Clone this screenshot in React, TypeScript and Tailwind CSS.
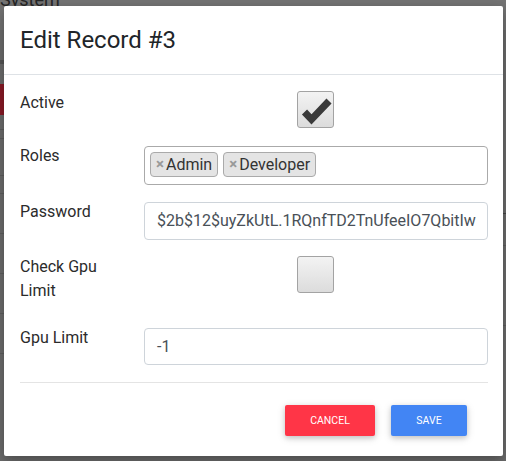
import React from "react";

function Check({ checked }: { checked: boolean }) {
  return (
    <div className="w-[37px] h-[37px] rounded-[3px] border border-[#a3a3a3] bg-gradient-to-b from-[#f3f3f3] to-[#dcdcdc] relative">
      {checked && (
        <svg className="absolute left-0 top-0" width="36" height="36" viewBox="0 0 36 36">
          <polyline
            points="6.5,20 13.5,27.5 31,9"
            fill="none"
            stroke="#3a3a3a"
            strokeWidth="7"
            strokeLinejoin="miter"
            strokeLinecap="butt"
          />
        </svg>
      )}
    </div>
  );
}

function Tag({ label }: { label: string }) {
  return (
    <div className="flex items-center h-[25px] mr-[5px] px-[5px] rounded-[4px] border border-[#aaaaaa] bg-[#e4e4e4] text-[16px] leading-[23px] text-[#333]">
      <span className="text-[#999] font-bold text-[15px] mr-[2px]">×</span>
      <span>{label}</span>
    </div>
  );
}

export default function App() {
  const font = { fontFamily: "Roboto, 'Liberation Sans', sans-serif" };
  return (
    <div className="relative w-[506px] h-[461px] overflow-hidden bg-[#6c6c6c]" style={font}>
      {/* background page (dimmed) */}
      <div className="absolute left-0 top-0 w-[506px] h-[30px] bg-[#747474]" />
      <div className="absolute left-0 top-[-10px] text-[18px] leading-[20px] text-[#262626]">System</div>
      <div className="absolute left-0 top-[60px] w-[4px] h-[4px] bg-[#555]" />
      <div className="absolute left-0 top-[84px] w-[4px] h-[31px] bg-[#8a1a26]" />
      <div className="absolute left-0 top-[129px] w-[4px] h-px bg-[#5e5e5e]" />
      <div className="absolute left-0 top-[138px] w-[4px] h-px bg-[#5e5e5e]" />
      <div className="absolute left-0 top-[175px] w-[4px] h-px bg-[#5e5e5e]" />
      <div className="absolute left-0 top-[193px] w-[4px] h-px bg-[#5e5e5e]" />
      <div className="absolute left-0 top-[233px] w-[4px] h-px bg-[#5e5e5e]" />
      <div className="absolute left-0 top-[273px] w-[4px] h-px bg-[#5e5e5e]" />
      <div className="absolute left-0 top-[313px] w-[4px] h-px bg-[#5e5e5e]" />
      <div className="absolute left-0 top-[353px] w-[4px] h-px bg-[#5e5e5e]" />
      <div className="absolute right-0 top-[213px] w-[3px] h-px bg-[#444]" />
      <div className="absolute right-0 top-[245px] w-[3px] h-px bg-[#5e5e5e]" />
      <div className="absolute right-0 top-[325px] w-[3px] h-px bg-[#5e5e5e]" />

      {/* modal */}
      <div className="absolute left-[4px] top-[6px] w-[499px] h-[450px] bg-white rounded-[2px] shadow-[0_5px_11px_0_rgba(0,0,0,0.18),0_4px_15px_0_rgba(0,0,0,0.15)] flex flex-col">
        <div className="h-[68px] px-[16px] flex items-center border-b border-[#dee2e6] box-content">
          <h4 className="text-[24px] leading-[36px] font-normal text-[#212529]">Edit Record #3</h4>
        </div>

        <div className="pl-[16px] pr-[15px] pt-[16px] flex flex-col text-[16px] leading-[24px] text-[#2b2b2b]">
          {/* Active */}
          <div className="flex">
            <div className="w-[124px] shrink-0">Active</div>
            <div className="flex-1 flex justify-center">
              <div className="ml-[-5px] -mr-[3px]">
                <Check checked />
              </div>
            </div>
          </div>

          {/* Roles */}
          <div className="flex mt-[16px]">
            <div className="w-[124px] shrink-0">Roles</div>
            <div className="flex-1 mt-[2px] h-[39px] rounded-[4px] border border-[#aaaaaa] flex items-start pl-[5px] pt-[5px]">
              <Tag label="Admin" />
              <Tag label="Developer" />
            </div>
          </div>

          {/* Password */}
          <div className="flex mt-[15px]">
            <div className="w-[124px] shrink-0">Password</div>
            <div className="flex-1 mt-[2px] h-[38px] rounded-[4px] border border-[#ced4da] px-[12px] flex items-center text-[#495057] whitespace-nowrap overflow-hidden">
              $2b$12$uyZkUtL.1RQnfTD2TnUfeeIO7QbitIw
            </div>
          </div>

          {/* Check Gpu Limit */}
          <div className="flex mt-[15px]">
            <div className="w-[110px] mr-[14px] shrink-0">Check Gpu Limit</div>
            <div className="flex-1 flex justify-center">
              <div className="mt-[1px] ml-[-5px] -mr-[3px]">
                <Check checked={false} />
              </div>
            </div>
          </div>

          {/* Gpu Limit */}
          <div className="flex mt-[23px]">
            <div className="w-[124px] shrink-0">Gpu Limit</div>
            <div className="flex-1 mt-[2px] h-[37px] rounded-[4px] border border-[#ced4da] px-[12px] flex items-center text-[#495057]">
              -1
            </div>
          </div>

          <div className="mt-[17px] h-px bg-[#e4e4e4]" />

          <div className="flex justify-end mt-[22px] pr-[21px] gap-[16px]">
            <button className="w-[90px] h-[31px] rounded-[2px] bg-[#ff3547] text-white text-[10.5px] uppercase shadow-[0_2px_5px_0_rgba(0,0,0,0.16),0_2px_10px_0_rgba(0,0,0,0.12)]">
              Cancel
            </button>
            <button className="w-[76px] h-[31px] rounded-[2px] bg-[#4285f4] text-white text-[10.5px] uppercase shadow-[0_2px_5px_0_rgba(0,0,0,0.16),0_2px_10px_0_rgba(0,0,0,0.12)]">
              Save
            </button>
          </div>
        </div>
      </div>
    </div>
  );
}
